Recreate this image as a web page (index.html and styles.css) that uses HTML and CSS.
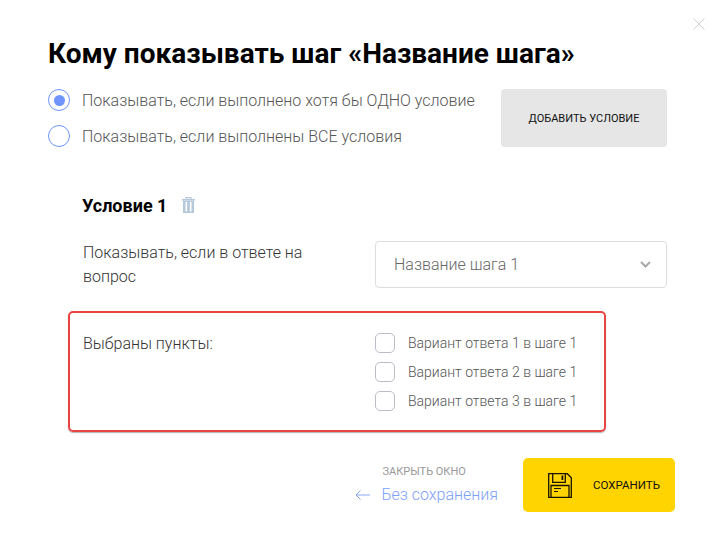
FILE: index.html
```
<!DOCTYPE html>
<html lang="ru">
<head>
<meta charset="utf-8">
<title>Кому показывать шаг</title>
<link rel="stylesheet" href="styles.css">
</head>
<body>
<div class="modal">
  <svg class="close" width="12" height="12" viewBox="0 0 12 12"><path d="M.5.5l11 11M11.500.5l-11 11" stroke="#d0d0d0" fill="none"/></svg>
  <h1 class="title">Кому показывать шаг «Название шага»</h1>
  <div class="mode">
    <div class="radios">
      <label class="radio-row"><span class="radio radio-on"></span><span>Показывать, если выполнено хотя бы ОДНО условие</span></label>
      <label class="radio-row"><span class="radio"></span><span>Показывать, если выполнены ВСЕ условия</span></label>
    </div>
    <button class="add">ДОБАВИТЬ УСЛОВИЕ</button>
  </div>
  <div class="cond-head">
    <h2 class="cond-title">Условие 1</h2>
    <svg class="trash" width="13" height="16" viewBox="0 0 13 16"><path d="M4 2.500V.7h5v1.800" fill="none" stroke="#b5c8dc" stroke-width="1.200"/><path d="M0 2h13v1.700H0z" fill="#b5c8dc"/><path d="M1 4h11v12H1zM3.500 5v9.500h1.600V5zM7.900 5v9.500h1.600V5z" fill="#b5c8dc" fill-rule="evenodd"/></svg>
  </div>
  <div class="row-q">
    <div class="row-label">Показывать, если в ответе на вопрос</div>
    <div class="select">
      <span>Название шага 1</span>
      <svg width="11" height="7" viewBox="0 0 11 7"><path d="M1 1l4.500 4.500L10 1" fill="none" stroke="#a9a9a9" stroke-width="2"/></svg>
    </div>
  </div>
  <div class="picked">
    <div class="picked-label">Выбраны пункты:</div>
    <div class="checks">
      <label class="check-row"><span class="check"></span><span>Вариант ответа 1 в шаге 1</span></label>
      <label class="check-row"><span class="check"></span><span>Вариант ответа 2 в шаге 1</span></label>
      <label class="check-row"><span class="check"></span><span>Вариант ответа 3 в шаге 1</span></label>
    </div>
  </div>
  <div class="footer">
    <div class="discard">
      <div class="discard-top">ЗАКРЫТЬ ОКНО</div>
      <div class="discard-link">
        <svg width="15" height="10" viewBox="0 0 15 10"><path d="M15 5H1M5.500.5L1 5l4.500 4.500" fill="none" stroke="#8aa8f8"/></svg>
        <span>Без сохранения</span>
      </div>
    </div>
    <button class="save">
      <svg width="24" height="25" viewBox="0 0 24 25"><path d="M.7.7h18.600l4 4v19.600H.7z" fill="none" stroke="#1a1400" stroke-width="1.300"/><path d="M4.700.7v8.600h12.600V.7" fill="none" stroke="#1a1400" stroke-width="1.300"/><path d="M13.500 2.500h1.800v4.500h-1.800z" fill="#1a1400"/><path d="M3 24.300V12.500h18v11.800" fill="none" stroke="#1a1400" stroke-width="1.300"/><path d="M6 15.500h7M6 18.500h4" fill="none" stroke="#1a1400"/></svg>
      <span>СОХРАНИТЬ</span>
    </button>
  </div>
</div>
</body>
</html>
```
FILE: styles.css
```
* { box-sizing: border-box; }
html, body { margin: 0; background: #fff; }
body { font-family: Roboto, "Noto Sans", sans-serif; width: 722px; height: 552px; overflow: hidden; }
.modal { position: relative; padding: 38px 47px 0 48px; height: 552px; }
.close { position: absolute; left: 693px; top: 18px; }
.title { margin: 0; font-size: 28px; font-weight: 700; line-height: 32px; color: #000; }
.mode { display: flex; justify-content: space-between; margin-top: 19px; margin-right: 8px; }
.radios { display: flex; flex-direction: column; gap: 14px; }
.radio-row { display: flex; align-items: center; gap: 12px; font-size: 16px; font-weight: 300; color: #555; height: 22px; }
.radio { width: 22px; height: 22px; border-radius: 50%; border: 1px solid #6f94fb; display: flex; align-items: center; justify-content: center; }
.radio-on::after { content: ""; width: 11px; height: 11px; border-radius: 50%; background: #6f94fb; }
.add { width: 166px; height: 58px; border: 0; border-radius: 4px; background: #e6e6e6; font: 400 11px Roboto, sans-serif; color: #111; padding: 0; }
.cond-head { display: flex; align-items: center; gap: 15px; margin: 47px 0 0 34px; height: 22px; }
.cond-title { margin: 0; font-size: 18px; font-weight: 700; color: #000; }
.row-q { display: flex; justify-content: space-between; margin: 25px 8px 0 35px; }
.row-label { width: 240px; font-size: 16px; font-weight: 300; line-height: 24px; color: #333; }
.select { width: 292px; height: 47px; border: 1px solid #ddd; border-radius: 4px; display: flex; align-items: center; justify-content: space-between; padding: 0 15px 0 18px; font-size: 16px; font-weight: 300; color: #666; }
.picked { display: flex; width: 538px; height: 121px; margin: 22px 0 0 20px; border: 2px solid #e94444; border-radius: 5px; box-shadow: 0 1px 1px rgba(0,0,0,.3); padding: 19px 0 0 13px; }
.picked-label { width: 292px; font-size: 16px; font-weight: 300; line-height: 24px; color: #333; }
.checks { display: flex; flex-direction: column; gap: 9px; padding-top: 1px; }
.check-row { display: flex; align-items: center; gap: 13px; font-size: 14px; font-weight: 300; color: #555; height: 20px; }
.check { width: 20px; height: 20px; border: 1px solid #bcbcc8; border-radius: 5px; }
.footer { display: flex; justify-content: flex-end; align-items: flex-start; gap: 25px; margin-top: 26px; }
.discard { padding-top: 7px; }
.discard-top { font-size: 11px; line-height: 14px; color: #999; margin-left: 27px; }
.discard-link { display: flex; align-items: center; gap: 11px; font-size: 16px; font-weight: 300; color: #7d9ffa; margin-top: 5px; line-height: 22px; }
.save { display: flex; align-items: center; gap: 21px; width: 152px; height: 54px; border: 0; border-radius: 5px; background: #ffd400; padding: 0 0 0 25px; font: 400 11.500px Roboto, sans-serif; color: #111; }
```
